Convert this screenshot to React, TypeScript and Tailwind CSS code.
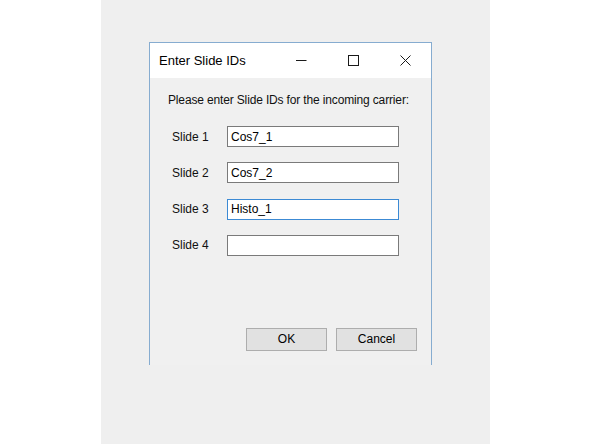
import React from 'react';

const slides = [
    { label: 'Slide 1', value: 'Cos7_1' },
    { label: 'Slide 2', value: 'Cos7_2' },
    { label: 'Slide 3', value: 'Histo_1', focused: true },
    { label: 'Slide 4', value: '' },
];

function TitleButton({ children }: { children: React.ReactNode }) {
    return (
        <div className="w-[52px] h-full flex items-center justify-center text-[#1a1a1a]">
            {children}
        </div>
    );
}

export default function App() {
    return (
        <div className="w-[592px] h-[444px] bg-white flex font-['Liberation_Sans',Arial,sans-serif]">
            <div className="ml-[101px] w-[389px] h-full bg-[#efefef] pt-[42px] pl-[48px]">
                {/* dialog window, bottom edge runs off the capture */}
                <div className="w-[283px] h-[323px] border-x border-t border-[#86acd0] flex flex-col">
                    <div className="h-[35px] bg-white flex items-center">
                        <div className="pl-[9px] text-[13px] text-black flex-1">Enter Slide IDs</div>
                        <div className="flex h-full">
                            <TitleButton>
                                <svg width="11" height="11" viewBox="0 0 11 11">
                                    <path d="M0 5.5h10.5" stroke="currentColor" strokeWidth="1" />
                                </svg>
                            </TitleButton>
                            <TitleButton>
                                <svg width="11" height="11" viewBox="0 0 11 11">
                                    <rect x="0.5" y="0.5" width="10" height="10" fill="none" stroke="currentColor" strokeWidth="1" />
                                </svg>
                            </TitleButton>
                            <TitleButton>
                                <svg width="11" height="11" viewBox="0 0 11 11">
                                    <path d="M0.5 0.5l10 10M10.5 0.5l-10 10" stroke="currentColor" strokeWidth="1" />
                                </svg>
                            </TitleButton>
                        </div>
                    </div>
                    <div className="flex-1 bg-[#f0f0f0] flex flex-col">
                        <div className="mt-[15px] pl-[18px] text-[12px] leading-[14px] tracking-[-0.15px] text-[#111]">
                            Please enter Slide IDs for the incoming carrier:
                        </div>
                        <div className="mt-[19px] pl-[22px] flex flex-col gap-[15.3px]">
                            {slides.map((s) => (
                                <div key={s.label} className="flex items-center h-[21px]">
                                    <div className="w-[55px] text-[12px] text-[#111]">{s.label}</div>
                                    <div
                                        className={
                                            s.focused
                                                ? 'w-[172px] h-[21px] bg-white border border-[#3c8ad4] flex items-center pl-[3px] text-[12px] text-black'
                                                : 'w-[172px] h-[21px] bg-white border border-[#7a7a7a] flex items-center pl-[3px] text-[12px] text-black'
                                        }
                                    >
                                        {s.value}
                                    </div>
                                </div>
                            ))}
                        </div>
                        <div className="mt-[72px] pr-[14px] flex justify-end gap-[9px]">
                            <div className="w-[81px] h-[23px] bg-[#e1e1e1] border border-[#adadad] flex items-center justify-center text-[12px] text-black">
                                OK
                            </div>
                            <div className="w-[81px] h-[23px] bg-[#e1e1e1] border border-[#adadad] flex items-center justify-center text-[12px] text-black">
                                Cancel
                            </div>
                        </div>
                    </div>
                </div>
            </div>
        </div>
    );
}
